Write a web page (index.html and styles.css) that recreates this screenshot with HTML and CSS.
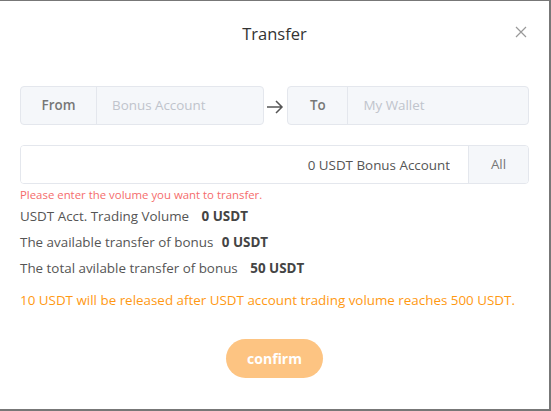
FILE: index.html
```html
<!DOCTYPE html>
<html>
<head>
  <meta charset="UTF-8">
  <meta name="viewport" content="width=device-width,initial-scale=1.0">
  <title>Transfer</title>
  <link rel="stylesheet" href="styles.css">
</head>
<body>
  <div class="dialog">
    <div class="dialog-header">
      <h2>Transfer</h2>
      <span class="close">
        <svg width="12" height="12" viewBox="0 0 12 12"><path d="M1 1L11 11M11 1L1 11" stroke="#999" stroke-width="1.2" fill="none"/></svg>
      </span>
    </div>

    <div class="accounts">
      <div class="acct">
        <span class="acct-label">From</span>
        <span class="acct-value">Bonus Account</span>
      </div>
      <span class="arrow">
        <svg width="18" height="14" viewBox="0 0 18 14"><path d="M1 7H16M10 1L16 7L10 13" stroke="#555" stroke-width="1.5" fill="none"/></svg>
      </span>
      <div class="acct acct-to">
        <span class="acct-label">To</span>
        <span class="acct-value">My Wallet</span>
      </div>
    </div>

    <div class="amount">
      <input type="text" class="amount-input" placeholder="0 USDT Bonus Account">
      <span class="amount-all">All</span>
    </div>
    <div class="error">Please enter the volume you want to transfer.</div>

    <ul class="info">
      <li>USDT Acct. Trading Volume <b class="v1">0 USDT</b></li>
      <li>The available transfer of bonus <b>0 USDT</b></li>
      <li>The total avilable transfer of bonus <b class="v3">50 USDT</b></li>
    </ul>

    <p class="notice">10 USDT will be released after USDT account trading volume reaches 500 USDT.</p>

    <div class="footer">
      <button type="button" class="confirm">confirm</button>
    </div>
  </div>
</body>
</html>
```

FILE: styles.css
```css
body {
  margin: 0;
  background: #777;
  font-family: "Open Sans", "Noto Sans", sans-serif;
}

.dialog {
  background: #fff;
  width: 509px;
  height: 408px;
  margin: 1px 0 0 0;
  padding: 0 20px;
  color: #606266;
  font-size: 13.4px;
}

.dialog-header {
  position: relative;
  text-align: center;
  padding-top: 22px;
  height: 63px;
}

.dialog-header h2 {
  margin: 0;
  font-size: 16.5px;
  font-weight: normal;
  color: #333;
  line-height: 22px;
}

.close {
  position: absolute;
  right: 2px;
  top: 23px;
}

.accounts {
  display: flex;
  align-items: center;
}

.acct {
  display: flex;
  width: 243px;
  height: 37px;
  border: 1px solid #e4e7ed;
  border-radius: 4px;
  background: #f5f7fa;
  line-height: 37px;
}

.acct-to {
  width: 241px;
}

.acct-label {
  width: 75px;
  text-align: center;
  border-right: 1px solid #e4e7ed;
  font-weight: 600;
  color: #777;
}

.acct-to .acct-label {
  width: 59px;
}

.acct-value {
  padding-left: 15px;
  color: #c0c4cc;
}

.arrow {
  width: 24px;
  display: flex;
  justify-content: center;
  padding-top: 2px;
}

.amount {
  display: flex;
  margin-top: 20px;
  height: 37px;
  border: 1px solid #e4e7ed;
  border-radius: 4px;
  overflow: hidden;
}

.amount-input {
  flex: 1;
  border: none;
  outline: none;
  text-align: right;
  padding: 0 18px;
  font-family: inherit;
  font-size: 13.4px;
}

.amount-input::placeholder {
  color: #555;
}

.amount-all {
  width: 59px;
  border-left: 1px solid #e4e7ed;
  background: #f5f7fa;
  text-align: center;
  line-height: 37px;
  color: #777;
}

.error {
  color: #f56c6c;
  font-size: 11.4px;
  margin-top: 3px;
  line-height: 16px;
}

.info {
  list-style: none;
  margin: 0;
  padding: 0;
}

.info li {
  line-height: 26px;
  color: #555;
}

.info b {
  margin-left: 5px;
  color: #444;
}

.info .v1 {
  margin-left: 9px;
}

.info .v3 {
  margin-left: 9px;
}

.notice {
  color: #ff9912;
  margin: 9px 0 0;
  line-height: 20px;
}

.footer {
  text-align: center;
  margin-top: 29px;
}

.confirm {
  width: 97px;
  height: 39px;
  border: none;
  border-radius: 20px;
  background: #fdc482;
  color: #fff;
  font-family: inherit;
  font-size: 14px;
  font-weight: bold;
}
```
